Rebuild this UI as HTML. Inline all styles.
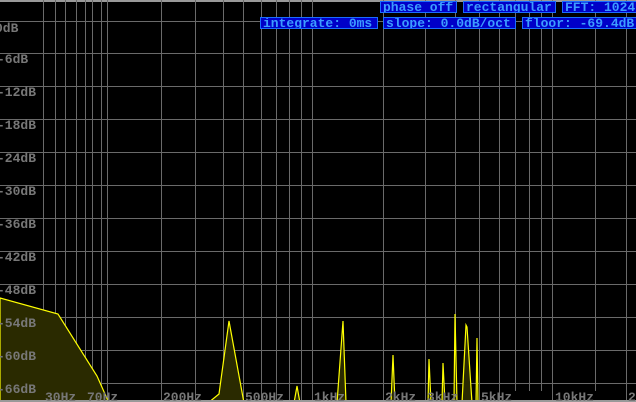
<!DOCTYPE html>
<html><head><style>
html,body{margin:0;padding:0;background:#000;width:636px;height:402px;overflow:hidden}
svg{display:block}
.lbl{font-family:"Liberation Mono",monospace;font-weight:bold;font-size:13px;fill:#777}
.box{position:absolute;background:#0000c8;border:1px solid #1a6cff;color:#3c9cff;font-family:"Liberation Mono",monospace;font-weight:bold;font-size:13px;line-height:11px;height:10px;white-space:nowrap;overflow:hidden;padding:0 2px}
</style></head><body>
<div style="position:relative;width:636px;height:402px">
<svg width="636" height="402" viewBox="0 0 636 402">
<g stroke="#6a6a6a" stroke-width="1">
<line x1="0" y1="1" x2="636" y2="1" stroke="#999" stroke-width="2"/>
<line x1="43.5" y1="0" x2="43.5" y2="402"/>
<line x1="55.5" y1="0" x2="55.5" y2="402"/>
<line x1="65.5" y1="0" x2="65.5" y2="402"/>
<line x1="76.5" y1="0" x2="76.5" y2="402"/>
<line x1="85.5" y1="0" x2="85.5" y2="402"/>
<line x1="92.5" y1="0" x2="92.5" y2="402"/>
<line x1="101.5" y1="0" x2="101.5" y2="402"/>
<line x1="107.5" y1="0" x2="107.5" y2="402"/>
<line x1="161.5" y1="0" x2="161.5" y2="402"/>
<line x1="195.5" y1="0" x2="195.5" y2="402"/>
<line x1="223.5" y1="0" x2="223.5" y2="402"/>
<line x1="243.5" y1="0" x2="243.5" y2="402"/>
<line x1="261.5" y1="0" x2="261.5" y2="402"/>
<line x1="276.5" y1="0" x2="276.5" y2="402"/>
<line x1="289.5" y1="0" x2="289.5" y2="402"/>
<line x1="301.5" y1="0" x2="301.5" y2="402"/>
<line x1="312.5" y1="0" x2="312.5" y2="402"/>
<line x1="383.5" y1="0" x2="383.5" y2="402"/>
<line x1="425.5" y1="0" x2="425.5" y2="402"/>
<line x1="455.5" y1="0" x2="455.5" y2="402"/>
<line x1="479.5" y1="0" x2="479.5" y2="402"/>
<line x1="499.5" y1="0" x2="499.5" y2="402"/>
<line x1="515.5" y1="0" x2="515.5" y2="391"/>
<line x1="529.5" y1="0" x2="529.5" y2="391"/>
<line x1="541.5" y1="0" x2="541.5" y2="391"/>
<line x1="552.5" y1="0" x2="552.5" y2="402"/>
<line x1="595.5" y1="0" x2="595.5" y2="391"/>
<line x1="626.5" y1="0" x2="626.5" y2="402"/>
<line x1="0" y1="21.5" x2="636" y2="21.5"/>
<line x1="0" y1="53.5" x2="636" y2="53.5"/>
<line x1="0" y1="86.5" x2="636" y2="86.5"/>
<line x1="0" y1="119.5" x2="636" y2="119.5"/>
<line x1="0" y1="152.5" x2="636" y2="152.5"/>
<line x1="0" y1="185.5" x2="636" y2="185.5"/>
<line x1="0" y1="218.5" x2="636" y2="218.5"/>
<line x1="0" y1="251.5" x2="636" y2="251.5"/>
<line x1="0" y1="284.5" x2="636" y2="284.5"/>
<line x1="0" y1="317.5" x2="636" y2="317.5"/>
<line x1="0" y1="350.5" x2="636" y2="350.5"/>
<line x1="0" y1="383.5" x2="636" y2="383.5"/>
</g>
<g fill="#2a2a00" stroke="#ffff00" stroke-width="1.2">
<polygon points="0,298 58,314 97,376 109,403 0,403"/>
<polygon points="208,403 219,394 229,321 244,403"/>
<polygon points="294,403 297,386 300,403"/>
<polygon points="337,403 343,321 346,403"/>
<polygon points="391,403 393,355 395,403"/>
<polygon points="428,403 429,359 431,403"/>
<polygon points="442,403 443,363 445,403"/>
<polygon points="454,403 455,314 457,403"/>
<polygon points="462,403 466,325 467,327 472,403"/>
<polygon points="476,403 477,338 478,403"/>
</g>
<line x1="0" y1="401" x2="636" y2="401" stroke="#999" stroke-width="2"/>
<g class="lbl">
<text x="-5" y="32">0dB</text>
<text x="-3" y="63">-6dB</text>
<text x="-3" y="96">-12dB</text>
<text x="-3" y="129">-18dB</text>
<text x="-3" y="162">-24dB</text>
<text x="-3" y="195">-30dB</text>
<text x="-3" y="228">-36dB</text>
<text x="-3" y="261">-42dB</text>
<text x="-3" y="294">-48dB</text>
<text x="-3" y="327">-54dB</text>
<text x="-3" y="360">-60dB</text>
<text x="-3" y="393">-66dB</text>
<text x="45" y="401">30Hz</text>
<text x="87" y="401">70Hz</text>
<text x="163" y="401">200Hz</text>
<text x="245" y="401">500Hz</text>
<text x="314" y="401">1kHz</text>
<text x="385" y="401">2kHz</text>
<text x="427" y="401">3kHz</text>
<text x="481" y="401">5kHz</text>
<text x="555" y="401">10kHz</text>
<text x="628" y="401">20kHz</text>
</g>
</svg>
<div class="box" style="left:380px;top:1px;width:71px">phase off</div>
<div class="box" style="left:463px;top:1px;width:87px">rectangular</div>
<div class="box" style="left:562px;top:1px;width:80px">FFT: 1024</div>
<div class="box" style="left:260px;top:17px;width:112px">integrate: 0ms</div>
<div class="box" style="left:383px;top:17px;width:127px">slope: 0.0dB/oct</div>
<div class="box" style="left:522px;top:17px;width:120px">floor: -69.4dB</div>
</div>
</body></html>
